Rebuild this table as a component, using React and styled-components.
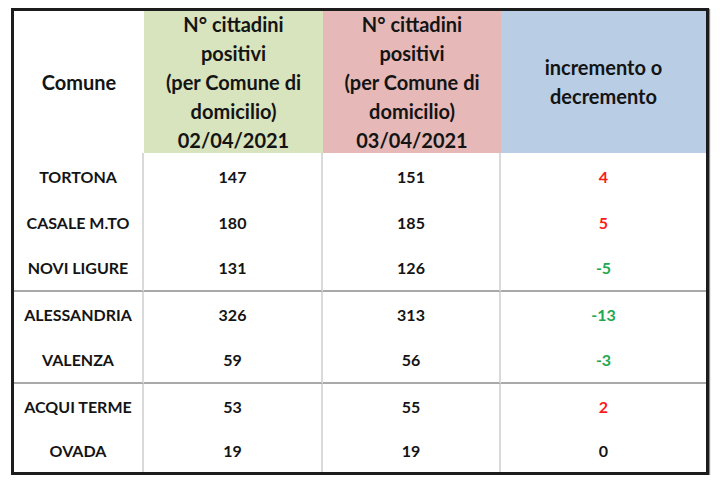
import React from "react";
import styled, { createGlobalStyle } from "styled-components";

const GlobalStyle = createGlobalStyle`
    html, body {
        margin: 0;
        padding: 0;
        background: #ffffff;
    }
    body {
        font-family: Lato, "Open Sans", "Liberation Sans", sans-serif;
        color: #141414;
    }
`;

const Sheet = styled.div`
    display: grid;
    grid-template-columns: 130px 179px 178px 205px;
    width: max-content;
    margin: 8px 0 0 11px;
    border: 3px solid #1c1c1c;
    box-shadow: 1px 1px 1px rgba(0, 0, 0, 0.45);
    background: #ffffff;
`;

const HeaderCell = styled.div`
    height: 142px;
    display: flex;
    align-items: center;
    justify-content: center;
    text-align: center;
    background: ${props => props.$bg || "#ffffff"};
    font-size: 20px;
    font-weight: 700;
    line-height: 29px;
    white-space: nowrap;
`;

const Cell = styled.div`
    box-sizing: border-box;
    height: ${props => props.$h + (props.$groupEnd ? 2 : 0)}px;
    display: flex;
    align-items: center;
    justify-content: center;
    font-size: 16px;
    font-weight: 700;
    color: ${props => props.$color || "#141414"};
    border-right: ${props => props.$last ? "none" : "2px solid #dadada"};
    border-bottom: ${props => props.$groupEnd ? "2px solid #a9a9a9" : "none"};
`;

const rows = [
    { name: "TORTONA", a: 147, b: 151, h: 46 },
    { name: "CASALE M.TO", a: 180, b: 185, h: 46 },
    { name: "NOVI LIGURE", a: 131, b: 126, h: 45, end: true },
    { name: "ALESSANDRIA", a: 326, b: 313, h: 45 },
    { name: "VALENZA", a: 59, b: 56, h: 45, end: true },
    { name: "ACQUI TERME", a: 53, b: 55, h: 44 },
    { name: "OVADA", a: 19, b: 19, h: 44 },
];

function deltaColor(d) {
    if (d > 0) return "#ff1a1a";
    if (d < 0) return "#1fa84f";
    return "#141414";
}

export default function App() {
    return (
        <>
            <GlobalStyle />
            <Sheet>
                <HeaderCell>Comune</HeaderCell>
                <HeaderCell $bg="#d8e4bd">
                    <div>N° cittadini<br />positivi<br />(per Comune di<br />domicilio)<br />02/04/2021</div>
                </HeaderCell>
                <HeaderCell $bg="#e6b9b8">
                    <div>N° cittadini<br />positivi<br />(per Comune di<br />domicilio)<br />03/04/2021</div>
                </HeaderCell>
                <HeaderCell $bg="#b9cde5">
                    <div>incremento o<br />decremento</div>
                </HeaderCell>

                {rows.map(r => {
                    const d = r.b - r.a;
                    return (
                        <React.Fragment key={r.name}>
                            <Cell $h={r.h} $groupEnd={r.end}>{r.name}</Cell>
                            <Cell $h={r.h} $groupEnd={r.end}>{r.a}</Cell>
                            <Cell $h={r.h} $groupEnd={r.end}>{r.b}</Cell>
                            <Cell $h={r.h} $groupEnd={r.end} $last $color={deltaColor(d)}>{d}</Cell>
                        </React.Fragment>
                    );
                })}
            </Sheet>
        </>
    );
}
